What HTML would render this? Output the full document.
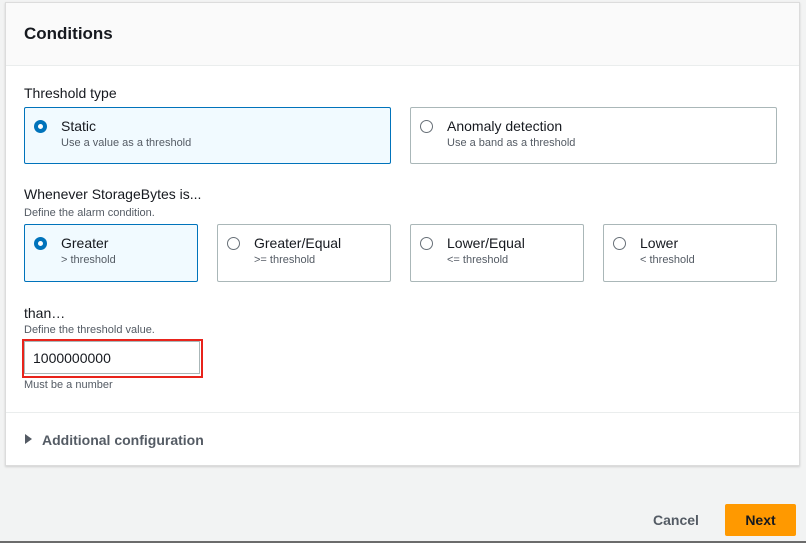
<!DOCTYPE html>
<html><head><style>
*{box-sizing:border-box;margin:0;padding:0}
body{width:806px;height:543px;background:#f2f3f3;font-family:"Liberation Sans",sans-serif;color:#16191f;position:relative;overflow:hidden}
.panel{position:absolute;left:5px;top:2px;width:795px;height:464px;background:#fff;border:1px solid #dcdcdc;box-shadow:0 1px 2px rgba(0,0,0,.15)}
.hdr{position:absolute;left:0;top:0;right:0;height:63px;background:#fafafa;border-bottom:1px solid #eaeded}
.hdr h2{position:absolute;left:18px;top:21px;font-size:17px;font-weight:bold}
.a{position:absolute}
.lbl{font-size:14px}
.desc{font-size:11px;color:#545b64}
.card{position:absolute;border:1px solid #aab7b8;border-radius:2px;background:#fff}
.card.sel{background:#f1faff;border-color:#0073bb}
.card .r{position:absolute;left:9px;top:12px;width:13px;height:13px;border-radius:50%;border:1px solid #687078;background:#fff}
.card.sel .r{border:4px solid #0073bb}
.card .t{position:absolute;left:36px;top:10px;font-size:14px}
.card .d{position:absolute;left:36px;top:29px;font-size:11px;color:#545b64}
</style></head><body>
<div class="panel">
<div class="hdr"><h2>Conditions</h2></div>
<div class="a lbl" style="left:18px;top:82px">Threshold type</div>
<div class="card sel" style="left:18px;top:104px;width:367px;height:57px"><div class="r"></div><div class="t">Static</div><div class="d">Use a value as a threshold</div></div>
<div class="card" style="left:404px;top:104px;width:367px;height:57px"><div class="r"></div><div class="t">Anomaly detection</div><div class="d">Use a band as a threshold</div></div>
<div class="a lbl" style="left:18px;top:183px">Whenever StorageBytes is...</div>
<div class="a desc" style="left:18px;top:204px">Define the alarm condition.</div>
<div class="card sel" style="left:18px;top:221px;width:174px;height:58px"><div class="r"></div><div class="t">Greater</div><div class="d">&gt; threshold</div></div>
<div class="card" style="left:211px;top:221px;width:174px;height:58px"><div class="r"></div><div class="t">Greater/Equal</div><div class="d">&gt;= threshold</div></div>
<div class="card" style="left:404px;top:221px;width:174px;height:58px"><div class="r"></div><div class="t">Lower/Equal</div><div class="d">&lt;= threshold</div></div>
<div class="card" style="left:597px;top:221px;width:174px;height:58px"><div class="r"></div><div class="t">Lower</div><div class="d">&lt; threshold</div></div>
<div class="a lbl" style="left:18px;top:302px">than…</div>
<div class="a desc" style="left:18px;top:321px">Define the threshold value.</div>
<div class="a" style="left:16px;top:336px;width:181px;height:39px;border:2px solid #e8231b"></div>
<div class="a" style="left:18px;top:338px;width:176px;height:33px;border:1px solid #aab7b8;font-size:14px;padding:8px 0 0 8px">1000000000</div>
<div class="a desc" style="left:18px;top:376px">Must be a number</div>
<div class="a" style="left:0;right:0;top:409px;border-top:1px solid #eaeded"></div>
<div class="a" style="left:19px;top:431px;width:0;height:0;border-left:7px solid #545b64;border-top:5px solid transparent;border-bottom:5px solid transparent"></div>
<div class="a" style="left:36px;top:429px;font-size:14px;font-weight:bold;color:#545b64">Additional configuration</div>
</div>
<div class="a" style="left:653px;top:512px;font-size:14px;font-weight:bold;color:#545b64">Cancel</div>
<div class="a" style="left:725px;top:504px;width:71px;height:32px;background:#ff9900;border-radius:2px;font-size:14px;font-weight:bold;text-align:center;line-height:32px">Next</div>
<div class="a" style="left:0;right:0;top:541px;height:2px;background:#6b6b6b"></div>
</body></html>
